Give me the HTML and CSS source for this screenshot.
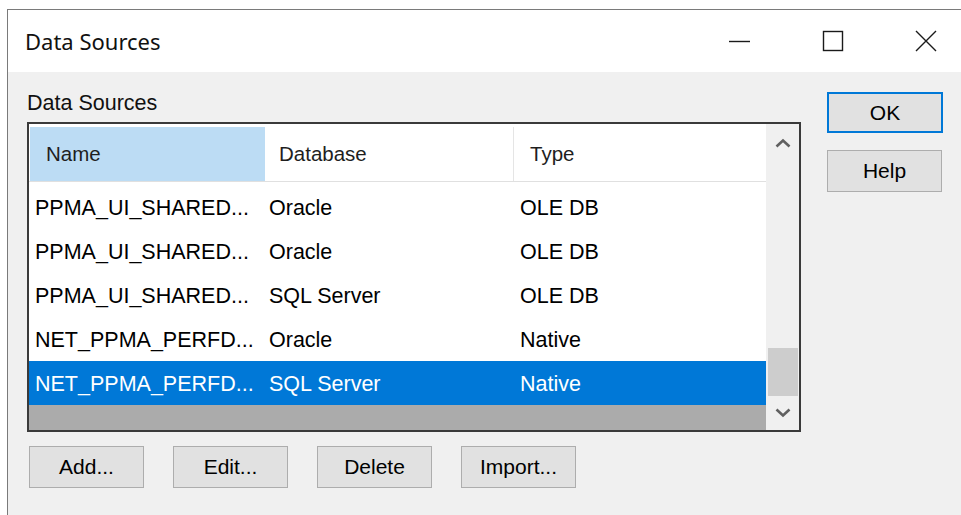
FILE: index.html
```html
<!DOCTYPE html>
<html lang="en">
<head>
<meta charset="utf-8">
<title>Data Sources</title>
<link rel="stylesheet" href="styles.css">
</head>
<body>
<div class="window">
  <div class="titlebar">
    <div class="title">Data Sources</div>
    <div class="controls">
      <div class="ctrl">
        <svg width="22" height="22" viewBox="0 0 22 22"><path d="M0 11.5H21" stroke="#1a1a1a" stroke-width="1.4" fill="none"/></svg>
      </div>
      <div class="ctrl">
        <svg width="22" height="22" viewBox="0 0 22 22"><rect x="1.5" y="1.5" width="19" height="19" stroke="#1a1a1a" stroke-width="1.4" fill="none"/></svg>
      </div>
      <div class="ctrl">
        <svg width="22" height="22" viewBox="0 0 22 22"><path d="M1 1L21 21M21 1L1 21" stroke="#1a1a1a" stroke-width="1.4" fill="none"/></svg>
      </div>
    </div>
  </div>
  <div class="client">
    <div class="main">
      <div class="label">Data Sources</div>
      <div class="listview">
        <div class="list-body">
          <div class="header">
            <div class="hcell hot">Name</div>
            <div class="hcell sep">Database</div>
            <div class="hcell">Type</div>
          </div>
          <div class="rows">
            <div class="row"><span class="c1">PPMA_UI_SHARED...</span><span class="c2">Oracle</span><span class="c3">OLE DB</span></div>
            <div class="row"><span class="c1">PPMA_UI_SHARED...</span><span class="c2">Oracle</span><span class="c3">OLE DB</span></div>
            <div class="row"><span class="c1">PPMA_UI_SHARED...</span><span class="c2">SQL Server</span><span class="c3">OLE DB</span></div>
            <div class="row"><span class="c1">NET_PPMA_PERFD...</span><span class="c2">Oracle</span><span class="c3">Native</span></div>
            <div class="row selected"><span class="c1">NET_PPMA_PERFD...</span><span class="c2">SQL Server</span><span class="c3">Native</span></div>
          </div>
          <div class="empty"></div>
        </div>
        <div class="scrollbar">
          <div class="arrow up">
            <svg width="16" height="10" viewBox="0 0 16 10"><path d="M1.5 8.5L8 2.5L14.5 8.5" stroke="#606060" stroke-width="2.6" fill="none"/></svg>
          </div>
          <div class="track"><div class="thumb"></div></div>
          <div class="arrow down">
            <svg width="16" height="10" viewBox="0 0 16 10"><path d="M1.5 1.5L8 7.5L14.5 1.5" stroke="#606060" stroke-width="2.6" fill="none"/></svg>
          </div>
        </div>
      </div>
      <div class="actions">
        <button class="btn">Add...</button>
        <button class="btn">Edit...</button>
        <button class="btn">Delete</button>
        <button class="btn">Import...</button>
      </div>
    </div>
    <div class="side">
      <button class="btn default">OK</button>
      <button class="btn">Help</button>
    </div>
  </div>
</div>
</body>
</html>
```

FILE: styles.css
```css
html, body {
  margin: 0;
  padding: 0;
  background: #ffffff;
  overflow: hidden;
  width: 961px;
  height: 515px;
}

body {
  font-family: "Liberation Sans", Arial, sans-serif;
  color: #000;
}

.window {
  margin: 9px 0 0 7px;
  width: 964px;
  height: 520px;
  border-left: 1px solid #7a7a7a;
  border-top: 1px solid #7a7a7a;
  display: flex;
  flex-direction: column;
}

.titlebar {
  height: 62px;
  background: #fff;
  display: flex;
  align-items: center;
  justify-content: space-between;
}

.title {
  padding-left: 17px;
  font-family: "Noto Sans", "Open Sans", sans-serif;
  font-size: 22px;
  color: #111;
}

.controls {
  display: flex;
  height: 100%;
}

.ctrl {
  width: 93px;
  display: flex;
  align-items: center;
  justify-content: center;
}

.client {
  flex: 1;
  background: #f0f0f0;
  display: flex;
  padding: 0 0 0 19px;
}

.main {
  display: flex;
  flex-direction: column;
  width: 774px;
}

.label {
  font-size: 21.5px;
  margin-top: 18px;
  height: 32px;
  line-height: 27px;
  color: #111;
}

.listview {
  width: 770px;
  height: 306px;
  border: 2px solid #3a3a3a;
  background: #fff;
  display: flex;
}

.list-body {
  flex: 1;
  display: flex;
  flex-direction: column;
  background: #ababab;
}

.header {
  display: flex;
  height: 58px;
  background: #fff;
  border-bottom: 1px solid #e0e0e0;
  box-sizing: border-box;
  padding-top: 3px;
}

.hcell {
  font-size: 20.5px;
  color: #1e1e1e;
  display: flex;
  align-items: center;
  box-sizing: border-box;
}

.hcell:nth-child(1) { width: 235px; margin-left: 1px; padding-left: 16px; }
.hcell:nth-child(2) { width: 248px; padding-left: 14px; }
.hcell:nth-child(3) { flex: 1; padding-left: 16px; border-left: 1px solid #e5e5e5; }

.hcell.hot {
  background: #bcdcf4;
}

.rows {
  background: #fff;
  padding-top: 3px;
}

.row {
  height: 44px;
  display: flex;
  align-items: center;
  padding-top: 2px;
  box-sizing: border-box;
  font-size: 21.5px;
  color: #000;
}

.row .c1 { width: 234px; padding-left: 6px; box-sizing: border-box; }
.row .c2 { width: 251px; box-sizing: border-box; padding-left: 6px; }
.row .c3 { flex: 1; padding-left: 6px; }

.row.selected {
  background: #0078d7;
  color: #fff;
}

.empty {
  flex: 1;
}

.scrollbar {
  width: 33px;
  background: #f0f0f0;
  display: flex;
  flex-direction: column;
}

.arrow {
  display: flex;
  align-items: center;
  justify-content: center;
}

.arrow.up { height: 38px; }
.arrow.down { height: 34px; }

.track {
  flex: 1;
  display: flex;
  flex-direction: column;
  justify-content: flex-end;
  padding: 0 1px 0 2px;
}

.thumb {
  height: 48px;
  background: #cdcdcd;
}

.actions {
  display: flex;
  gap: 29px;
  margin-top: 14px;
  padding-left: 2px;
}

.btn {
  width: 115px;
  height: 42px;
  background: #e1e1e1;
  border: 1px solid #adadad;
  font-family: "Liberation Sans", Arial, sans-serif;
  font-size: 21px;
  color: #000;
  padding: 0;
  margin: 0;
  display: flex;
  align-items: center;
  justify-content: center;
}

.side {
  display: flex;
  flex-direction: column;
  gap: 17px;
  margin-left: 26px;
  padding-top: 20px;
}

.btn.default {
  width: 116px;
  border: 2px solid #0078d7;
  height: 41px;
}
```
